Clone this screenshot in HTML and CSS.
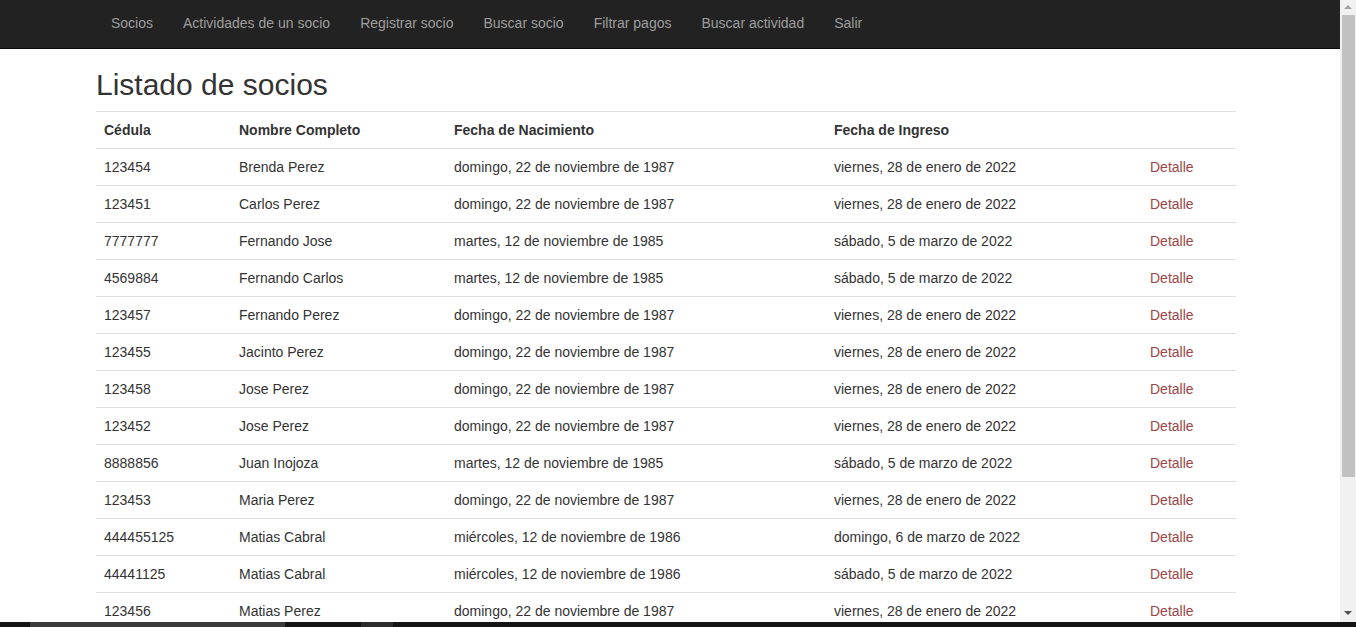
FILE: index.html
```html
<!DOCTYPE html>
<html lang="es">
<head>
<meta charset="utf-8">
<title>Listado de socios</title>
<link rel="stylesheet" href="styles.css">
</head>
<body>
<nav class="navbar">
  <div class="container">
    <ul class="nav">
      <li><a href="#">Socios</a></li>
      <li><a href="#">Actividades de un socio</a></li>
      <li><a href="#">Registrar socio</a></li>
      <li><a href="#">Buscar socio</a></li>
      <li><a href="#">Filtrar pagos</a></li>
      <li><a href="#">Buscar actividad</a></li>
      <li><a href="#">Salir</a></li>
    </ul>
  </div>
</nav>
<main class="container">
  <h2 class="title">Listado de socios</h2>
  <table class="table">
    <colgroup>
      <col class="c1"><col class="c2"><col class="c3"><col class="c4"><col class="c5">
    </colgroup>
    <tbody>
      <tr><th>Cédula</th><th>Nombre Completo</th><th>Fecha de Nacimiento</th><th>Fecha de Ingreso</th><th></th></tr>
      <tr><td>123454</td><td>Brenda Perez</td><td>domingo, 22 de noviembre de 1987</td><td>viernes, 28 de enero de 2022</td><td><a href="#">Detalle</a></td></tr>
      <tr><td>123451</td><td>Carlos Perez</td><td>domingo, 22 de noviembre de 1987</td><td>viernes, 28 de enero de 2022</td><td><a href="#">Detalle</a></td></tr>
      <tr><td>7777777</td><td>Fernando Jose</td><td>martes, 12 de noviembre de 1985</td><td>sábado, 5 de marzo de 2022</td><td><a href="#">Detalle</a></td></tr>
      <tr><td>4569884</td><td>Fernando Carlos</td><td>martes, 12 de noviembre de 1985</td><td>sábado, 5 de marzo de 2022</td><td><a href="#">Detalle</a></td></tr>
      <tr><td>123457</td><td>Fernando Perez</td><td>domingo, 22 de noviembre de 1987</td><td>viernes, 28 de enero de 2022</td><td><a href="#">Detalle</a></td></tr>
      <tr><td>123455</td><td>Jacinto Perez</td><td>domingo, 22 de noviembre de 1987</td><td>viernes, 28 de enero de 2022</td><td><a href="#">Detalle</a></td></tr>
      <tr><td>123458</td><td>Jose Perez</td><td>domingo, 22 de noviembre de 1987</td><td>viernes, 28 de enero de 2022</td><td><a href="#">Detalle</a></td></tr>
      <tr><td>123452</td><td>Jose Perez</td><td>domingo, 22 de noviembre de 1987</td><td>viernes, 28 de enero de 2022</td><td><a href="#">Detalle</a></td></tr>
      <tr><td>8888856</td><td>Juan Inojoza</td><td>martes, 12 de noviembre de 1985</td><td>sábado, 5 de marzo de 2022</td><td><a href="#">Detalle</a></td></tr>
      <tr><td>123453</td><td>Maria Perez</td><td>domingo, 22 de noviembre de 1987</td><td>viernes, 28 de enero de 2022</td><td><a href="#">Detalle</a></td></tr>
      <tr><td>444455125</td><td>Matias Cabral</td><td>miércoles, 12 de noviembre de 1986</td><td>domingo, 6 de marzo de 2022</td><td><a href="#">Detalle</a></td></tr>
      <tr><td>44441125</td><td>Matias Cabral</td><td>miércoles, 12 de noviembre de 1986</td><td>sábado, 5 de marzo de 2022</td><td><a href="#">Detalle</a></td></tr>
      <tr><td>123456</td><td>Matias Perez</td><td>domingo, 22 de noviembre de 1987</td><td>viernes, 28 de enero de 2022</td><td><a href="#">Detalle</a></td></tr>
    </tbody>
  </table>
</main>
<div class="scrollbar" aria-hidden="true">
  <div class="sb-arrow sb-up"></div>
  <div class="sb-track"><div class="sb-thumb"></div></div>
  <div class="sb-arrow sb-down"></div>
</div>
<div class="bottombar" aria-hidden="true">
  <span class="seg seg1"></span><span class="seg seg2"></span>
</div>
</body>
</html>
```
FILE: styles.css
```css
html {
  overflow: hidden;
  height: 100%;
}
body {
  margin: 0;
  width: 1340px;
  font-family: "Liberation Sans", Arial, Helvetica, sans-serif;
  font-size: 14px;
  line-height: 20px;
  color: #333;
  background: #fff;
}
.container {
  width: 1140px;
  padding: 0 15px;
  margin-left: 81px;
}
.navbar {
  background: #222;
  border-bottom: 1px solid #080808;
  height: 48px;
}
.nav {
  list-style: none;
  margin: 0;
  padding: 0;
  display: flex;
}
.nav a {
  display: block;
  padding: 13px 15px 15px;
  line-height: 20px;
  color: #9d9d9d;
  text-decoration: none;
}
.title {
  font-size: 30px;
  font-weight: 500;
  line-height: 33px;
  margin: 19px 0 10px;
  color: #333;
}
.table {
  width: 1140px;
  border-collapse: collapse;
  border-spacing: 0;
  table-layout: fixed;
}
.c1 { width: 135px; }
.c2 { width: 215px; }
.c3 { width: 380px; }
.c4 { width: 316px; }
.c5 { width: 94px; }
.table th,
.table td {
  padding: 8px;
  line-height: 20px;
  text-align: left;
  vertical-align: top;
  border-top: 1px solid #ddd;
  white-space: nowrap;
}
.table th {
  font-weight: bold;
}
.table a {
  color: #9e4646;
  text-decoration: none;
}
.scrollbar {
  position: fixed;
  top: 0;
  right: 0;
  width: 16px;
  height: 622px;
  background: #f1f1f1;
  display: flex;
  flex-direction: column;
}
.sb-arrow {
  height: 15px;
  position: relative;
}
.sb-up::after,
.sb-down::after {
  content: "";
  position: absolute;
  left: 4px;
  border-left: 4px solid transparent;
  border-right: 4px solid transparent;
}
.sb-up::after {
  top: 5px;
  border-bottom: 4px solid #a3a3a3;
}
.sb-down::after {
  top: 4px;
  border-top: 4px solid #505050;
}
.sb-track {
  flex: 1;
  padding: 0 1px 0 2px;
}
.sb-thumb {
  height: 462px;
  background: #c1c1c1;
}
.bottombar {
  position: fixed;
  left: 0;
  right: 0;
  bottom: 0;
  height: 5px;
  background: #141414;
  display: flex;
}
.seg {
  display: block;
  height: 5px;
  background: #3b3b3b;
}
.seg1 {
  margin-left: 30px;
  width: 255px;
}
.seg2 {
  margin-left: 76px;
  width: 32px;
  background: #2c2c2c;
}
```
